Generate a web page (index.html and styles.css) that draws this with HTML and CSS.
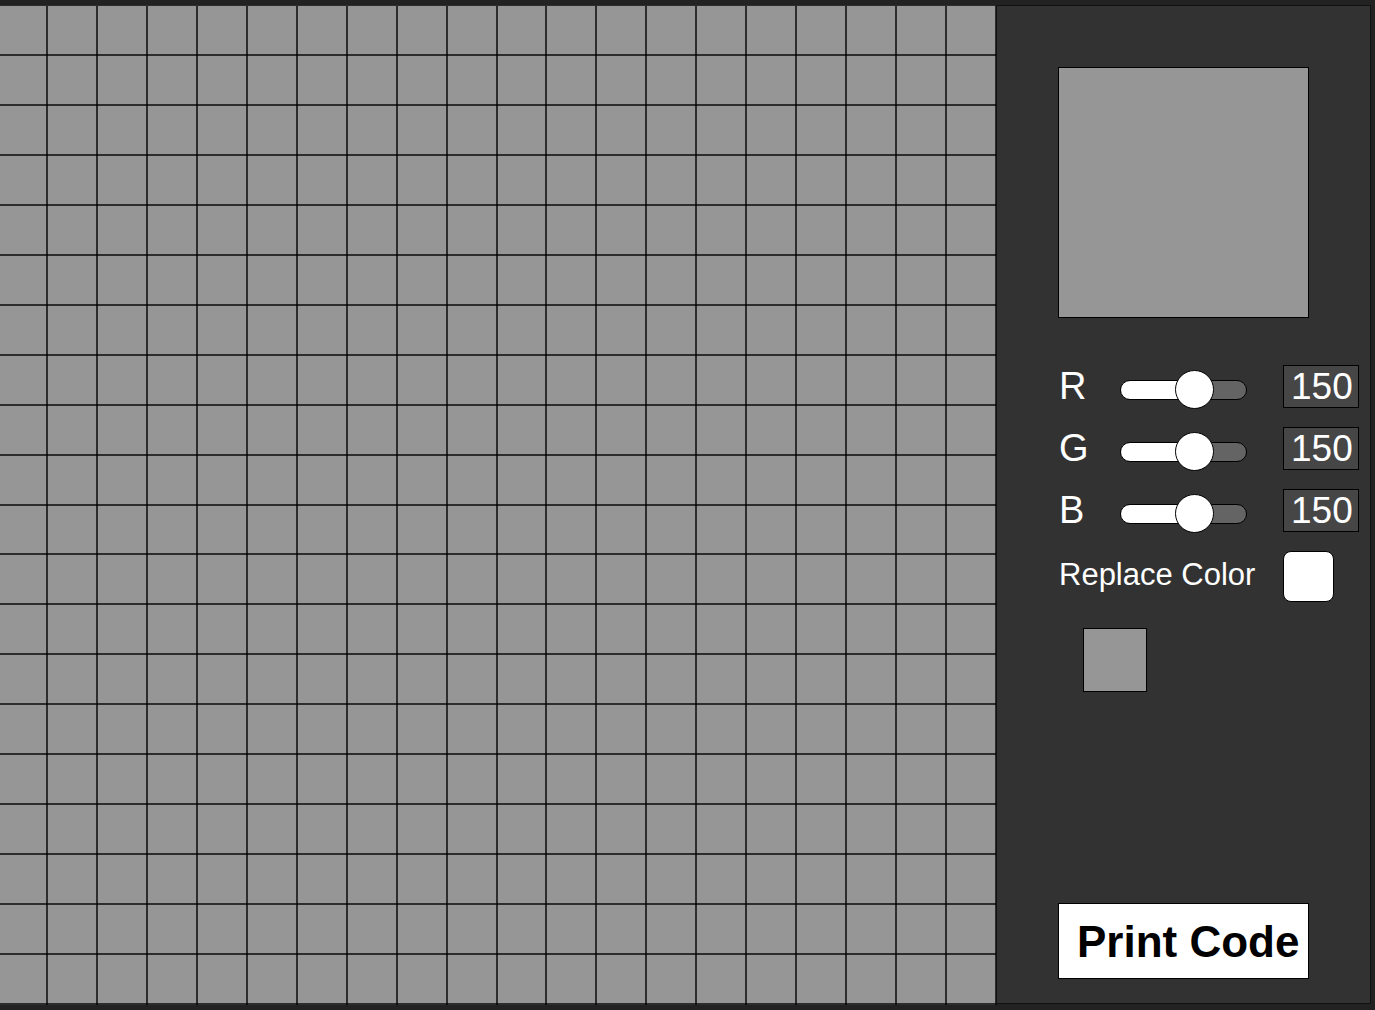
FILE: index.html
```
<!DOCTYPE html>
<html lang="en">
<head>
<meta charset="utf-8">
<title>Pixel Editor</title>
<link rel="stylesheet" href="styles.css">
</head>
<body>
<main class="editor">
  <section class="board" aria-label="Drawing grid">
    <div class="lines columns"><i></i><i></i><i></i><i></i><i></i><i></i><i></i><i></i><i></i><i></i><i></i><i></i><i></i><i></i><i></i><i></i><i></i><i></i><i></i><i></i></div>
    <div class="lines rows"><i></i><i></i><i></i><i></i><i></i><i></i><i></i><i></i><i></i><i></i><i></i><i></i><i></i><i></i><i></i><i></i><i></i><i></i><i></i><i></i></div>
  </section>
  <aside class="panel">
    <div class="preview"></div>
    <div class="channels">
      <div class="channel">
        <label for="red">R</label>
        <input class="slider" id="red" type="range" min="0" max="255" value="150">
        <input class="value" type="text" value="150" aria-label="Red value">
      </div>
      <div class="channel">
        <label for="green">G</label>
        <input class="slider" id="green" type="range" min="0" max="255" value="150">
        <input class="value" type="text" value="150" aria-label="Green value">
      </div>
      <div class="channel">
        <label for="blue">B</label>
        <input class="slider" id="blue" type="range" min="0" max="255" value="150">
        <input class="value" type="text" value="150" aria-label="Blue value">
      </div>
    </div>
    <div class="replace">
      <label for="replace">Replace Color</label>
      <input class="toggle" id="replace" type="checkbox">
    </div>
    <button class="swatch" type="button" aria-label="Use this color"></button>
    <button class="print" type="button">Print Code</button>
  </aside>
</main>
</body>
</html>
```
FILE: styles.css
```
* { box-sizing: border-box; }

body {
  margin: 0;
  background: #222;
  color: #fff;
  font-family: "Liberation Sans", Arial, sans-serif;
}

.editor {
  display: flex;
  min-height: 100vh;
  padding: 5px 4px 5px 0;
  overflow: hidden;
}

.board {
  flex: 1;
  display: grid;
  margin: 0 -1px 0 -2px;
  border-top: 1px solid #2c2c2c;
  background: #969696;
}

.lines {
  grid-area: 1 / 1;
  display: grid;
}

.columns { grid-template-columns: repeat(20, 1fr); }
.rows { grid-template-rows: repeat(20, 1fr); }
.columns i { border-right: 2px solid rgba(0, 0, 0, 0.7); }
.rows i { border-bottom: 2px solid rgba(0, 0, 0, 0.7); }

.panel {
  display: flex;
  flex-direction: column;
  align-items: flex-start;
  width: 375px;
  margin-bottom: 1px;
  padding: 61px 11px 24px 61px;
  border: 1px solid #111;
  background: #323232;
}

.preview {
  width: 251px;
  height: 251px;
  border: 1px solid #000;
  background: #969696;
}

.channels {
  display: grid;
  gap: 19px;
  align-self: stretch;
  margin-top: 47px;
}

.channel {
  display: grid;
  grid-template-columns: 62px 163px 76px;
  align-items: center;
  height: 43px;
  font-size: 38px;
  line-height: 43px;
}

.channel label,
.replace label {
  padding-left: 1px;
}

.slider {
  appearance: none;
  width: 127px;
  height: 20px;
  margin: 6px 0 0;
  border: 1px solid #000;
  border-radius: 10px;
  background: linear-gradient(to right, #fff 58%, #646464 58%);
}

/* lets the thumb's centre travel the full width of the bar */
.slider::-webkit-slider-runnable-track {
  margin: 0 -19px;
}

.slider::-webkit-slider-thumb {
  appearance: none;
  width: 39px;
  height: 39px;
  border: 1px solid #000;
  border-radius: 50%;
  background: #fff;
}

.value {
  width: 76px;
  height: 43px;
  margin: 0;
  padding: 0 0 0 7px;
  border: 1px solid #000;
  border-radius: 0;
  background: #464646;
  color: #fff;
  font: inherit;
  font-size: 37px;
}

.replace {
  display: grid;
  grid-template-columns: 225px 51px;
  margin-top: 19px;
  font-size: 31px;
  line-height: 48px;
}

.toggle {
  appearance: none;
  width: 51px;
  height: 51px;
  margin: 0;
  border: 1px solid #000;
  border-radius: 8px;
  background: #fff;
}

.swatch {
  width: 64px;
  height: 64px;
  margin: 26px 0 0 25px;
  padding: 0;
  border: 1px solid #000;
  background: #969696;
}

.print {
  width: 251px;
  height: 76px;
  margin-top: auto;
  padding: 2px 0 0 18px;
  border: 1px solid #000;
  background: #fff;
  color: #000;
  font-family: inherit;
  font-size: 44px;
  font-weight: bold;
  text-align: left;
  white-space: nowrap;
}
```
